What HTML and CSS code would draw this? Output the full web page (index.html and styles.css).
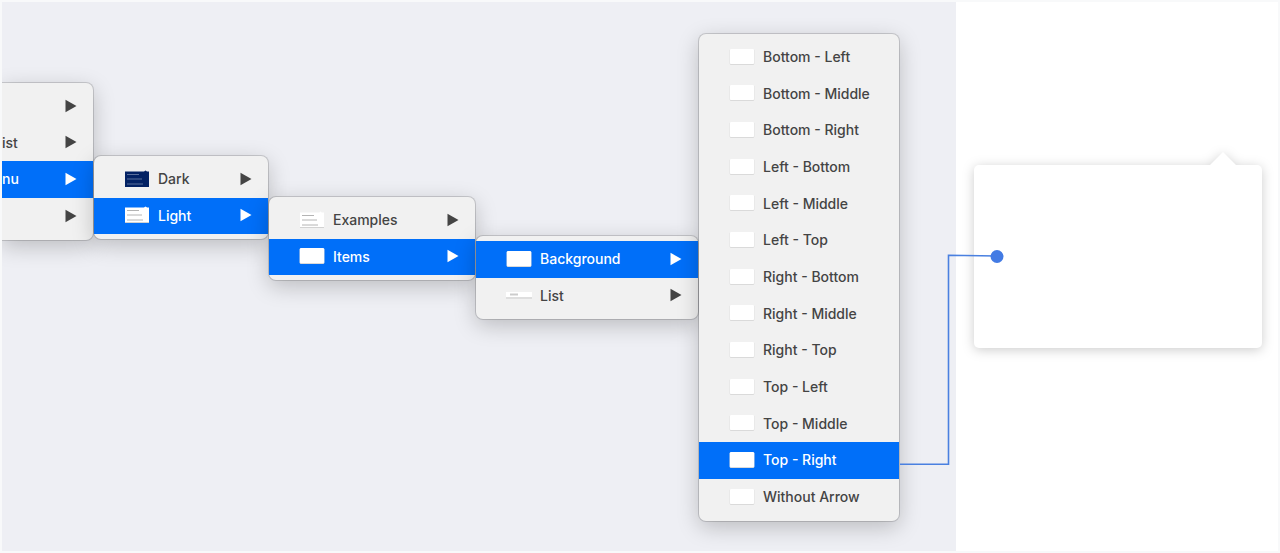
FILE: index.html
```
<!DOCTYPE html>
<html lang="en">
<head>
    <meta charset="UTF-8">
    <meta name="viewport" content="width=device-width, initial-scale=1.0">
    <title>Popover menu</title>
    <link rel="stylesheet" href="styles.css">
</head>
<body>
    <!-- shared icons -->
    <svg class="sprite" aria-hidden="true">
        <symbol id="arrow" viewBox="0 0 12 14"><path d="M0.5 0.8L11.5 7L0.5 13.2Z" fill="currentColor"/></symbol>
        <symbol id="box" viewBox="0 0 26 18">
            <rect x="1" y="2" width="24" height="15" rx="1" fill="#d2d2d2"/>
            <rect x="0.500" y="1.500" width="25" height="15" rx="1" fill="#e2e2e2"/>
            <rect x="1" y="1" width="24" height="15" rx="1" fill="#fff"/>
        </symbol>
        <symbol id="lines" viewBox="0 0 26 18">
            <path d="M1 2H20L21.500 1L23 2H25V17H1Z" fill="#d2d2d2"/>
            <path d="M1 1.500H20L21.500 0.500L23 1.500H25V16H1Z" fill="#fff"/>
            <path d="M3 4.500H15M3 9H18M3 14H19" stroke="#b4b4b4"/>
        </symbol>
        <symbol id="lines-dark" viewBox="0 0 26 18">
            <path d="M1 1.500H20L21.500 0.500L23 1.500H25V17H1Z" fill="#032264"/>
            <path d="M3 4.500H15M3 9H18M3 14H19" stroke="#5b709c"/>
        </symbol>
        <symbol id="row" viewBox="0 0 26 18">
            <rect x="0" y="7" width="26" height="6" fill="#dedede"/>
            <rect x="0" y="6" width="26" height="5" fill="#fff"/>
            <path d="M4 8.500H12" stroke="#ccc" stroke-width="2"/>
        </symbol>
    </svg>
    <div class="container">
        <main class="stage">
            <ul class="menu menu-root">
                <li><button><span class="label"></span><svg class="arrow"><use href="#arrow"/></svg></button></li>
                <li><button><span class="label">ist</span><svg class="arrow"><use href="#arrow"/></svg></button></li>
                <li><button class="active"><span class="label">nu</span><svg class="arrow"><use href="#arrow"/></svg></button></li>
                <li><button><span class="label"></span><svg class="arrow"><use href="#arrow"/></svg></button></li>
            </ul>
            <ul class="menu menu-theme">
                <li><button><svg class="thumb"><use href="#lines-dark"/></svg><span class="label">Dark</span><svg class="arrow"><use href="#arrow"/></svg></button></li>
                <li><button class="active"><svg class="thumb"><use href="#lines"/></svg><span class="label">Light</span><svg class="arrow"><use href="#arrow"/></svg></button></li>
            </ul>
            <ul class="menu menu-group">
                <li><button><svg class="thumb"><use href="#lines"/></svg><span class="label">Examples</span><svg class="arrow"><use href="#arrow"/></svg></button></li>
                <li><button class="active"><svg class="thumb"><use href="#box"/></svg><span class="label">Items</span><svg class="arrow"><use href="#arrow"/></svg></button></li>
            </ul>
            <ul class="menu menu-part">
                <li><button class="active"><svg class="thumb"><use href="#box"/></svg><span class="label">Background</span><svg class="arrow"><use href="#arrow"/></svg></button></li>
                <li><button><svg class="thumb"><use href="#row"/></svg><span class="label">List</span><svg class="arrow"><use href="#arrow"/></svg></button></li>
            </ul>
            <ul class="menu menu-position">
                <li><button><svg class="thumb"><use href="#box"/></svg><span class="label">Bottom - Left</span></button></li>
                <li><button><svg class="thumb"><use href="#box"/></svg><span class="label">Bottom - Middle</span></button></li>
                <li><button><svg class="thumb"><use href="#box"/></svg><span class="label">Bottom - Right</span></button></li>
                <li><button><svg class="thumb"><use href="#box"/></svg><span class="label">Left - Bottom</span></button></li>
                <li><button><svg class="thumb"><use href="#box"/></svg><span class="label">Left - Middle</span></button></li>
                <li><button><svg class="thumb"><use href="#box"/></svg><span class="label">Left - Top</span></button></li>
                <li><button><svg class="thumb"><use href="#box"/></svg><span class="label">Right - Bottom</span></button></li>
                <li><button><svg class="thumb"><use href="#box"/></svg><span class="label">Right - Middle</span></button></li>
                <li><button><svg class="thumb"><use href="#box"/></svg><span class="label">Right - Top</span></button></li>
                <li><button><svg class="thumb"><use href="#box"/></svg><span class="label">Top - Left</span></button></li>
                <li><button><svg class="thumb"><use href="#box"/></svg><span class="label">Top - Middle</span></button></li>
                <li><button class="active"><svg class="thumb"><use href="#box"/></svg><span class="label">Top - Right</span></button></li>
                <li><button><svg class="thumb"><use href="#box"/></svg><span class="label">Without Arrow</span></button></li>
            </ul>
        </main>
        <aside class="preview">
            <div class="popover"></div>
        </aside>
        <svg class="connector" viewBox="0 0 104 218" aria-hidden="true">
            <path d="M0 215.200H48.500V6.200L97 7" fill="none" stroke="#4a80e0" stroke-width="1.600"/>
            <circle cx="97" cy="7.500" r="6.500" fill="#437be4"/>
        </svg>
    </div>
</body>
</html>
```
FILE: styles.css
```
* {
    box-sizing: border-box;
}
body {
    font-family: Inter, "Liberation Sans", sans-serif;
    font-size: 14px;
    font-weight: 500;
    margin: 0;
    background-color: #f8f9fa;
}
.sprite {
    display: none;
}
.container {
    position: relative;
    display: flex;
    min-height: 100vh;
    padding: 2px;
}
.stage {
    flex: 1;
    display: flex;
    align-items: flex-start;
    gap: 1px;
    overflow: hidden;
    background-color: #eeeff4;
}
.menu {
    position: relative;
    flex-shrink: 0;
    list-style-type: none;
    margin: 0;
    padding: 5px 0;
    background-color: #f1f1f1;
    border-radius: 7px;
    box-shadow: 0 0 0 1px rgba(0,0,0,0.15), 0 6px 22px rgba(0,0,0,0.22);
}
.menu-root {
    width: 91px;
    margin-top: 81px;
    border-radius: 0 7px 7px 0;
}
.menu-theme {
    width: 174px;
    margin-top: 154px;
}
.menu-group {
    width: 206px;
    margin-top: 195px;
}
.menu-part {
    width: 222px;
    margin-top: 234px;
}
.menu-position {
    width: 200px;
    margin-top: 32px;
    margin-bottom: 30px;
}
.menu button {
    display: flex;
    align-items: center;
    gap: 8px;
    width: 100%;
    height: 37px;
    padding: 0 16px 2px 30px;
    border: none;
    background: none;
    color: #444;
    font: inherit;
    text-align: left;
    white-space: nowrap;
    cursor: pointer;
}
.menu li:nth-child(3n+2) button {
    height: 36px;
}
.menu-root button {
    padding-left: 0;
}
.menu button.active {
    background-color: #006ff9;
    color: white;
}
.label {
    flex: 1;
}
.thumb {
    flex-shrink: 0;
    width: 26px;
    height: 18px;
}
.arrow {
    flex-shrink: 0;
    width: 12px;
    height: 14px;
}
.preview {
    width: 322px;
    padding: 163px 16px 0 18px;
    background-color: white;
}
.popover {
    position: relative;
    min-height: 183px;
    background-color: white;
    border-radius: 5px;
    filter: drop-shadow(0 2px 6px rgba(0,0,0,0.2));
}
.popover::before {
    content: "";
    position: absolute;
    right: 26px;
    bottom: 100%;
    border: 13px solid transparent;
    border-top: none;
    border-bottom-color: white;
}
.connector {
    position: absolute;
    top: 249px;
    right: 276px;
    width: 104px;
    height: 218px;
}
```
